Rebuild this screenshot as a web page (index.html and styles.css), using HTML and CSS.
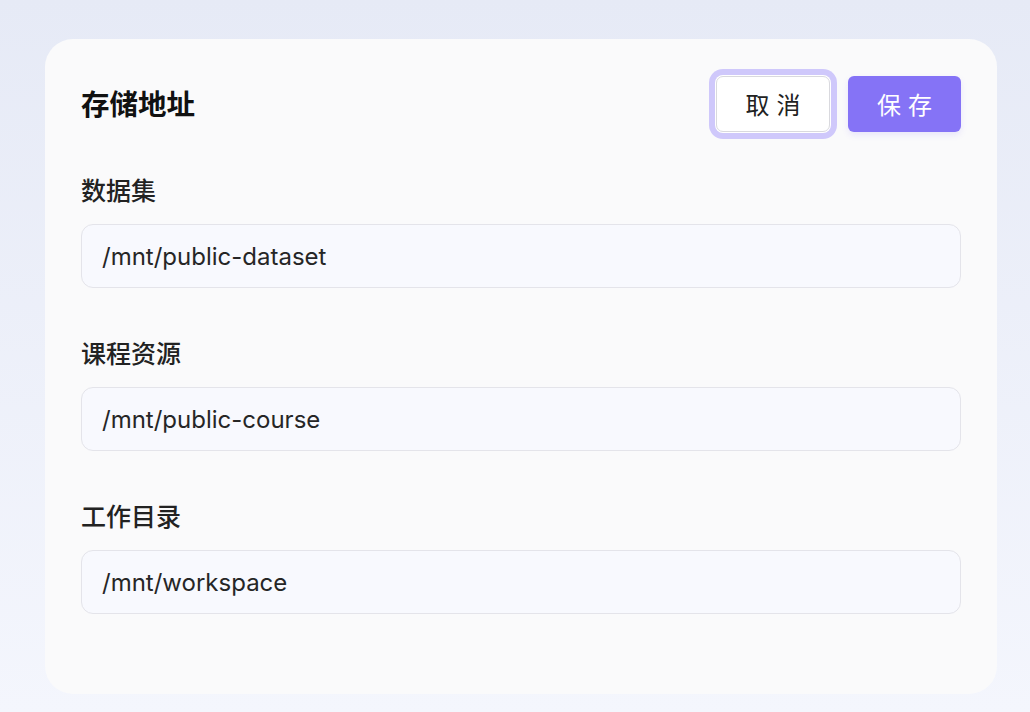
FILE: index.html
```html
<!DOCTYPE html>
<html lang="zh-CN">
<head>
<meta charset="utf-8">
<title>存储地址</title>
<link rel="stylesheet" href="styles.css">
</head>
<body>
<div class="page">
  <section class="card">
    <header class="card-head">
      <h1 class="title">存储地址</h1>
      <div class="actions">
        <button class="btn btn-ghost" type="button">取消</button>
        <button class="btn btn-primary" type="button">保存</button>
      </div>
    </header>
    <div class="fields">
      <div class="field">
        <label class="label">数据集</label>
        <div class="input">/mnt/public-dataset</div>
      </div>
      <div class="field">
        <label class="label">课程资源</label>
        <div class="input">/mnt/public-course</div>
      </div>
      <div class="field">
        <label class="label">工作目录</label>
        <div class="input">/mnt/workspace</div>
      </div>
    </div>
  </section>
</div>
</body>
</html>
```
FILE: styles.css
```css
* { box-sizing: border-box; }
html, body { margin: 0; padding: 0; }
body {
  width: 1030px;
  height: 712px;
  overflow: hidden;
  background: linear-gradient(180deg, #e6eaf6 0%, #f4f6fd 100%);
  font-family: Inter, "Noto Sans CJK SC", sans-serif;
  color: #222;
}
.page {
  padding: 39px 0 0 45px;
}
.card {
  width: 952px;
  height: 655px;
  background: #fafafb;
  border-radius: 28px;
  padding: 36px 36px 0 36px;
}
.card-head {
  display: flex;
  align-items: center;
  justify-content: space-between;
  height: 57px;
}
.title {
  margin: 0;
  font-family: "Noto Sans CJK SC", sans-serif;
  font-size: 28.5px;
  font-weight: 700;
  color: #111;
  line-height: 1;
  padding-top: 0;
}
.actions {
  display: flex;
  align-items: center;
  gap: 18px;
}
.btn {
  font-family: "Noto Sans CJK SC", sans-serif;
  font-size: 24px;
  letter-spacing: 7px;
  text-indent: 7px;
  height: 56px;
  width: 114px;
  border-radius: 6px;
  cursor: pointer;
  line-height: 1;
  padding: 0;
}
.btn-ghost {
  background: #fff;
  color: #222;
  border: 1px solid #d9d9de;
  box-shadow: 0 0 0 1px #fff, 0 0 0 7px #cfc8fb;
  border-radius: 7px;
  margin-top: 1px;
}
.btn-primary {
  background: #8573f6;
  color: #fff;
  border: none;
  box-shadow: 0 3px 6px rgba(133, 115, 246, 0.15);
  width: 113px;
}
.fields {
  margin-top: 43px;
  display: flex;
  flex-direction: column;
  gap: 50px;
}
.field {
  display: flex;
  flex-direction: column;
  gap: 21px;
}
.label {
  font-family: "Noto Sans CJK SC", sans-serif;
  font-size: 25px;
  line-height: 28px;
  color: #222;
  font-weight: 500;
}
.input {
  height: 64px;
  border: 1px solid #e4e4ea;
  border-radius: 12px;
  background: #f8f9fe;
  padding: 0 20px;
  display: flex;
  align-items: center;
  font-size: 24px;
  color: #262626;
}
```
